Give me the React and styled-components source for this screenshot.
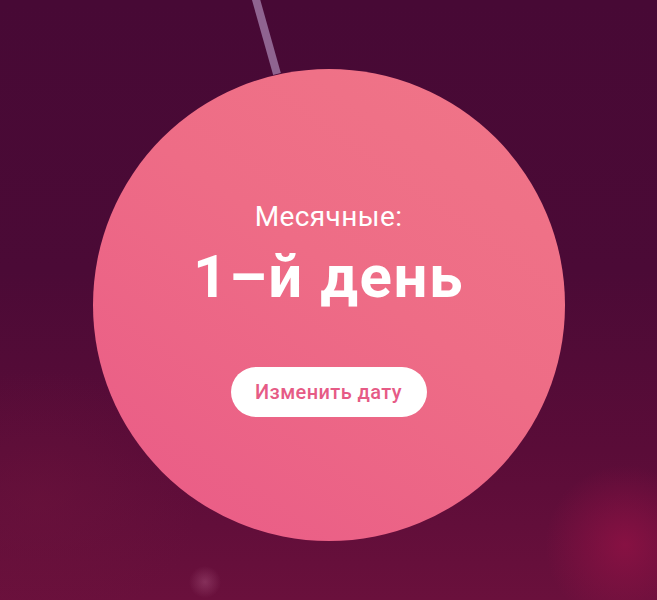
import React from 'react';
import styled, { createGlobalStyle } from 'styled-components';

const GlobalStyle = createGlobalStyle`
    html, body {
        margin: 0;
        padding: 0;
        height: 100%;
    }
    body {
        font-family: Roboto, "Noto Sans", "Liberation Sans", sans-serif;
    }
`

const Screen = styled.div`
    position: relative;
    width: 657px;
    height: 600px;
    overflow: hidden;
    display: flex;
    flex-direction: column;
    align-items: center;
    padding-top: 69px;
    box-sizing: border-box;
    background:
        radial-gradient(circle at 625px 545px, rgba(150, 18, 70, 0.7) 0, rgba(150, 18, 70, 0) 80px),
        radial-gradient(circle at 205px 582px, rgba(200, 120, 160, 0.3) 0, rgba(200, 120, 160, 0) 16px),
        radial-gradient(ellipse at 40px 500px, rgba(110, 20, 60, 0.45) 0, rgba(110, 20, 60, 0) 160px),
        linear-gradient(180deg, #470935 0%, #4b0a36 45%, #5a0c38 75%, #6a103c 100%);
`

const Thread = styled.svg`
    position: absolute;
    left: 0;
    top: 0;
    pointer-events: none;
`

const Circle = styled.div`
    position: relative;
    width: 472px;
    height: 472px;
    border-radius: 50%;
    background: linear-gradient(215deg, #f07688 0%, #ee6c86 45%, #e95a87 100%);
    display: flex;
    flex-direction: column;
    align-items: center;
    padding-top: 131px;
    box-sizing: border-box;
    color: #fff;
`

const Label = styled.div`
    font-size: 28px;
    line-height: 34px;
    font-weight: 400;
    letter-spacing: 0.4px;
`

const Day = styled.div`
    font-size: 60px;
    line-height: 66px;
    font-weight: 700;
    margin-top: 10px;
    letter-spacing: 1.5px;
`

const ChangeButton = styled.button`
    margin-top: 57px;
    height: 50px;
    width: 196px;
    border: none;
    border-radius: 25px;
    background: #fff;
    color: #e65b86;
    font-family: inherit;
    font-size: 20px;
    font-weight: 500;
    letter-spacing: 0.4px;
    cursor: pointer;
`

function App() {
    return (
        <>
            <GlobalStyle />
            <Screen>
                <Thread width="657" height="600">
                    <line x1="255" y1="-4" x2="277" y2="74" stroke="#8f6490" strokeWidth="8" />
                </Thread>
                <Circle>
                    <Label>Месячные:</Label>
                    <Day>1–й день</Day>
                    <ChangeButton>Изменить дату</ChangeButton>
                </Circle>
            </Screen>
        </>
    )
}

export default App
